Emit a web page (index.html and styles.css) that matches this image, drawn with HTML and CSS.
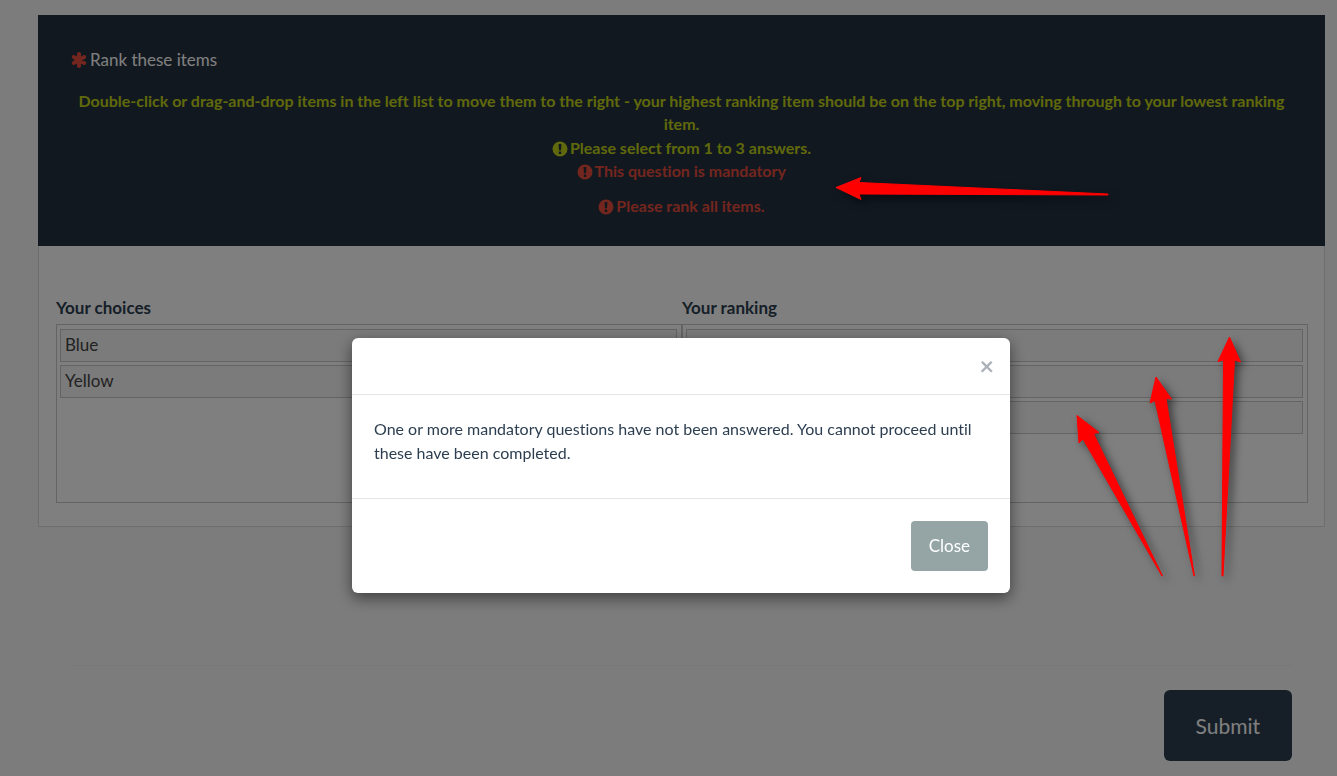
FILE: index.html
```
<!DOCTYPE html>
<html lang="en">
<head>
    <meta charset="UTF-8">
    <meta name="viewport" content="width=device-width, initial-scale=1.0">
    <title>Rank these items</title>
    <link rel="stylesheet" href="styles.css">
</head>
<body>

    <svg class="sprite" aria-hidden="true">
        <symbol id="icon-exclamation" viewBox="0 0 16 16">
            <path fill-rule="evenodd" d="M8 .5a7.500 7.500 0 1 0 0 15a7.500 7.500 0 1 0 0-15zM6.600 3h2.800l-.3 6.200H6.900zM6.800 10.600h2.400v2.300H6.800z"/>
        </symbol>
    </svg>

    <form class="survey">
        <div class="question">
            <!-- Question title and help -->
            <div class="question-header">
                <div class="question-text">
                    <svg class="asterisk" viewBox="0 0 16 16" aria-hidden="true">
                        <path d="M8 2v12M2.800 5l10.400 6M2.800 11l10.400-6"/>
                    </svg>
                    <span>Rank these items</span>
                </div>
                <div class="tips">
                    <div class="tip">Double-click or drag-and-drop items in the left list to move them to the right - your highest ranking item should be on the top right, moving through to your lowest ranking item.</div>
                    <div><svg class="icon"><use href="#icon-exclamation"/></svg> Please select from 1 to 3 answers.</div>
                    <div class="error"><svg class="icon"><use href="#icon-exclamation"/></svg> This question is mandatory</div>
                    <div class="error error-last"><svg class="icon"><use href="#icon-exclamation"/></svg> Please rank all items.</div>
                </div>
            </div>

            <!-- Ranking lists -->
            <div class="answers">
                <div class="column">
                    <h2>Your choices</h2>
                    <ul class="list">
                        <li>Blue</li>
                        <li>Yellow</li>
                    </ul>
                </div>
                <div class="column">
                    <h2>Your ranking</h2>
                    <ul class="list">
                        <li></li>
                        <li></li>
                        <li></li>
                    </ul>
                </div>
            </div>
        </div>

        <div class="navigator">
            <button type="submit" class="btn-submit">Submit</button>
        </div>
    </form>

    <!-- Alert dialog -->
    <div class="backdrop">
        <div class="modal" role="dialog" aria-modal="true">
            <div class="modal-header">
                <button type="button" class="close" aria-label="Dismiss">×</button>
            </div>
            <div class="modal-body">
                <p>One or more mandatory questions have not been answered. You cannot proceed until these have been completed.</p>
            </div>
            <div class="modal-footer">
                <button type="button" class="btn-close">Close</button>
            </div>
        </div>
    </div>

    <!-- Red arrows drawn over the page -->
    <svg class="arrows" width="1337" height="776" viewBox="0 0 1337 776" aria-hidden="true">
        <path d="M836 187.500L861 177.500L859 182.500L1108 194V195L859 194L861 199.500z"/>
        <path d="M1077 415.500L1099 432.500L1093.500 433.500L1162.500 576H1162L1083 439L1079 443z"/>
        <path d="M1156 377L1171.500 399L1166 398.500L1194.500 576H1194L1155 400.500L1150 403z"/>
        <path d="M1229.500 337L1240.500 362L1234.500 360L1223 576H1222L1223.500 360L1218 361.500z"/>
    </svg>

</body>
</html>
```
FILE: styles.css
```
* {
    box-sizing: border-box;
}

body {
    margin: 0;
    min-height: 100vh;
    background-color: #f8f8f8;
    color: #2c3e50;
    font-family: Lato, "Liberation Sans", sans-serif;
    font-size: 17px;
    font-variant-ligatures: none;
    line-height: 24px;
}

button {
    border: none;
    font-family: inherit;
    cursor: pointer;
}

.sprite {
    display: none;
}

.survey {
    padding: 15px 12px 15px 38px;
}

/* Question */
.question {
    background-color: #ffffff;
    border: 1px solid #dcdcdc;
    border-top: none;
}

.question-header {
    margin: 0 -1px;
    padding: 33px 23px 29px;
    background-color: #233140;
    color: #ffffff;
}

.question-text {
    display: flex;
    align-items: center;
    gap: 3px;
    padding-left: 10px;
    margin-bottom: 17px;
}

.asterisk {
    width: 16px;
    height: 16px;
    stroke: #e74c3c;
    stroke-width: 4;
    stroke-linecap: round;
}

.tips {
    color: #c0d216;
    font-size: 16px;
    font-weight: bold;
    text-align: center;
    line-height: 23px;
}

.tip {
    margin-bottom: 1px;
}

.icon {
    width: 16px;
    height: 16px;
    margin-right: -2px;
    fill: currentColor;
    vertical-align: -3px;
}

.error {
    color: #e74c3c;
}

.error-last {
    margin-top: 12px;
}

/* Ranking lists */
.answers {
    display: flex;
    padding: 50px 16px 23px 17px;
}

.column {
    flex: 1;
}

.column h2 {
    margin: 0 0 4px;
    font-size: 17px;
    line-height: 24px;
}

.list {
    display: flex;
    flex-direction: column;
    gap: 3px;
    min-height: 179px;
    margin: 0;
    padding: 4px 4px 4px 3px;
    border: 1px solid #c8c8c8;
    list-style: none;
}

.list li {
    height: 33px;
    padding: 3px 4px;
    background-color: #f6f6f6;
    border: 1px solid #c8c8c8;
    color: #444444;
}

/* Submit */
.navigator {
    display: flex;
    justify-content: flex-end;
    margin: 138px 33px 0;
    padding-top: 24px;
    border-top: 1px solid #f1f1f1;
}

.btn-submit {
    padding: 20px 32px;
    border-radius: 6px;
    background-color: #2c3e50;
    color: #ffffff;
    font-size: 21px;
    line-height: 31px;
}

/* Alert dialog */
.backdrop {
    position: fixed;
    inset: 0;
    padding: 338px 13px 0 38px;
    background-color: rgba(0, 0, 0, 0.5);
}

.modal {
    max-width: 658px;
    margin: 0 auto;
    background-color: #ffffff;
    border-radius: 6px;
    box-shadow: 0 5px 15px rgba(0, 0, 0, 0.5);
}

.modal-header {
    display: flex;
    justify-content: flex-end;
    padding: 16px 16px 17px;
    border-bottom: 1px solid #e5e5e5;
}

.close {
    padding: 0;
    background: none;
    color: #abb2b9;
    font-size: 25px;
    font-weight: bold;
    line-height: 23px;
}

.modal-body {
    padding: 22px;
    font-size: 16px;
}

.modal-body p {
    margin: 0 0 11px;
}

.modal-footer {
    display: flex;
    justify-content: flex-end;
    padding: 22px;
    border-top: 1px solid #e5e5e5;
}

.btn-close {
    padding: 13px 18px;
    border-radius: 4px;
    background-color: #95a5a6;
    color: #ffffff;
    font-size: 17px;
    line-height: 24px;
}

/* Arrows */
.arrows {
    position: absolute;
    top: 0;
    left: 0;
    fill: #ff0000;
    stroke: #ff0000;
    filter: drop-shadow(4px 4px 4px rgba(0, 0, 0, 0.5));
    pointer-events: none;
}
```
